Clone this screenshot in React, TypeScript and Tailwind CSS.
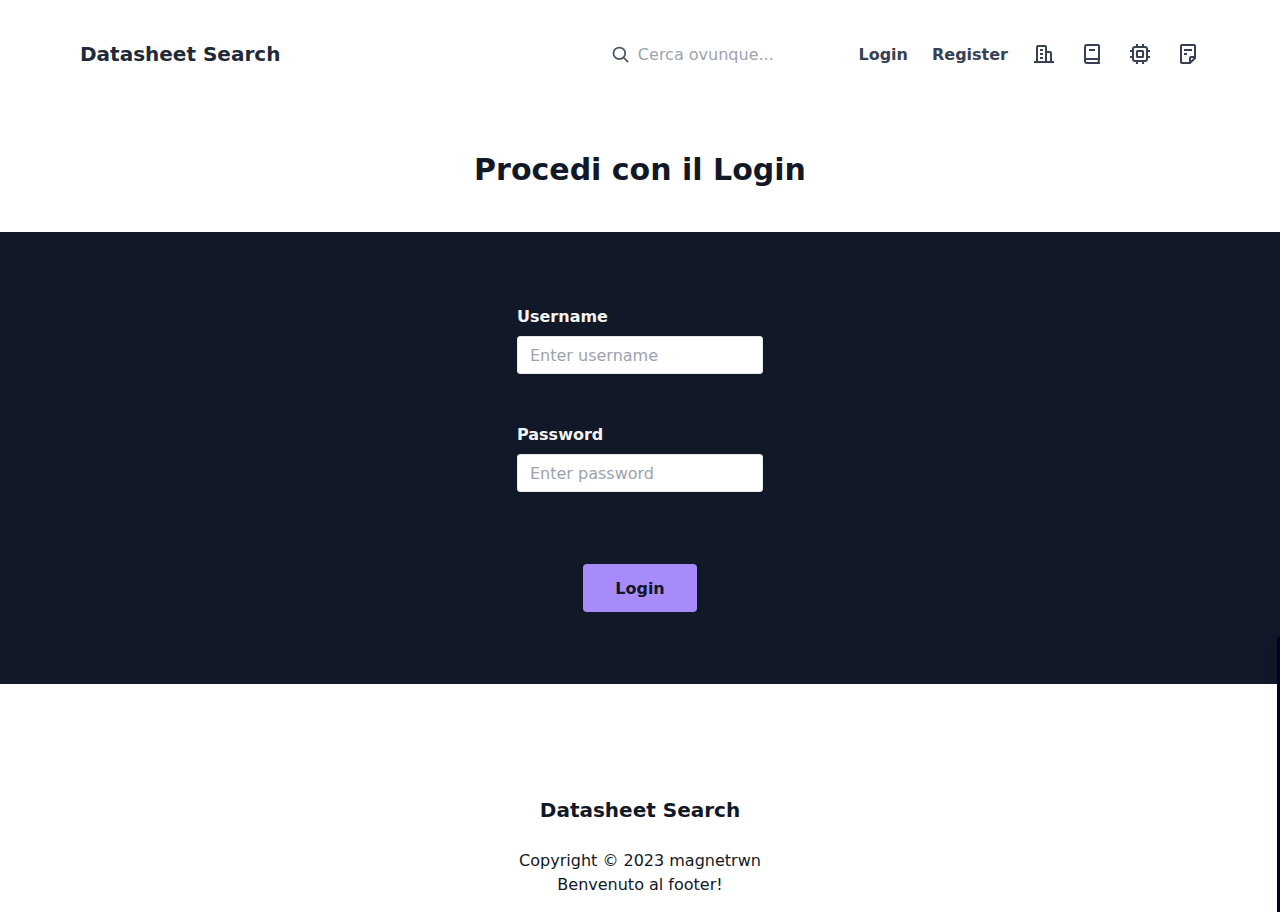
import React from "react";

function NavIcon({ children }: { children: React.ReactNode }) {
  return (
    <a href="#" className="block h-6 w-6">
      <svg
        className="h-6 w-6"
        viewBox="0 0 24 24"
        fill="none"
        stroke="currentColor"
        strokeWidth="2"
        strokeLinejoin="round"
      >
        {children}
      </svg>
    </a>
  );
}

function Header() {
  return (
    <header className="flex h-[108px] items-center justify-between px-20 text-gray-700">
      <a href="#" className="text-xl font-bold text-gray-800">Datasheet Search</a>
      <div className="flex items-center">
        <label className="mr-[34.6px] flex items-center pt-0.5">
          <svg
            className="mr-[7px] h-5 w-5 text-gray-600"
            viewBox="0 0 24 24"
            fill="none"
            stroke="currentColor"
            strokeWidth="2.1"
          >
            <circle cx="10" cy="10" r="7" />
            <path d="M15 15l5.5 5.5" />
          </svg>
          <input
            className="w-[186px] bg-transparent outline-none placeholder:text-[#9ca3af]"
            placeholder="Cerca ovunque..."
          />
        </label>
        <nav className="flex items-center gap-6 font-bold">
          <a href="#" className="pt-0.5">Login</a>
          <a href="#" className="pt-0.5">Register</a>
          <NavIcon>
            <path d="M2 20h20M5 20V5a1 1 0 0 1 1-1h7a1 1 0 0 1 1 1v15M14 10h4a1 1 0 0 1 1 1v9M8 8h3M8 12h3M8 16h3" />
          </NavIcon>
          <NavIcon>
            <path d="M19 17H6a1 1 0 0 0-1 1v1a2 2 0 0 0 2 2h13M5 19V5a2 2 0 0 1 2-2h11a1 1 0 0 1 1 1v14a3 3 0 0 0 0 3M9 8h6" />
          </NavIcon>
          <NavIcon>
            <rect x="5" y="5" width="14" height="14" rx="2" />
            <rect x="9" y="9" width="6" height="6" rx="0.5" />
            <path d="M9 2v3M15 2v3M9 19v3M15 19v3M2 9h3M2 15h3M19 9h3M19 15h3" />
          </NavIcon>
          <NavIcon>
            <path d="M14 21H6a1 1 0 0 1-1-1V4a1 1 0 0 1 1-1h12a1 1 0 0 1 1 1v12l-5 5v-5a1 1 0 0 1 1-1h4M8 8h8M8 12h3" />
          </NavIcon>
        </nav>
      </div>
    </header>
  );
}

function Field({ label, type }: { label: string; type: string }) {
  return (
    <label className="block w-[246px]">
      <span className="mb-1.5 block leading-[26px] font-bold text-gray-100">{label}</span>
      <input
        type={type}
        placeholder={"Enter " + label.toLowerCase()}
        className="block h-[38px] w-full rounded-[3px] border border-gray-200 bg-white px-3 text-gray-700 outline-none placeholder:text-[#9ca3af]"
      />
    </label>
  );
}

export default function App() {
  return (
    <div className="relative h-[912px] w-full overflow-hidden bg-white font-['DejaVu_Sans',sans-serif] text-base text-[#111827]">
      <Header />
      <h1 className="flex h-[124px] items-center justify-center text-3xl font-bold">
        Procedi con il Login
      </h1>
      <main className="flex h-[452px] flex-col items-center bg-[#111827] pt-[72px]">
        <Field label="Username" type="text" />
        <div className="h-12" />
        <Field label="Password" type="password" />
        <button className="mt-[72px] h-12 w-[114px] rounded bg-[#a78bfa] pt-0.5 font-bold">Login</button>
      </main>
      <footer className="flex flex-col items-center pt-28 text-center">
        <p className="mb-[25px] text-xl leading-7 font-bold">Datasheet Search</p>
        <p>Copyright © 2023 magnetrwn</p>
        <p>Benvenuto al footer!</p>
      </footer>
      <div className="absolute top-[637px] right-0 h-[400px] w-[3px] bg-[#000030] shadow-[0_0_16px_rgba(0,0,0,0.1)]" />
    </div>
  );
}
